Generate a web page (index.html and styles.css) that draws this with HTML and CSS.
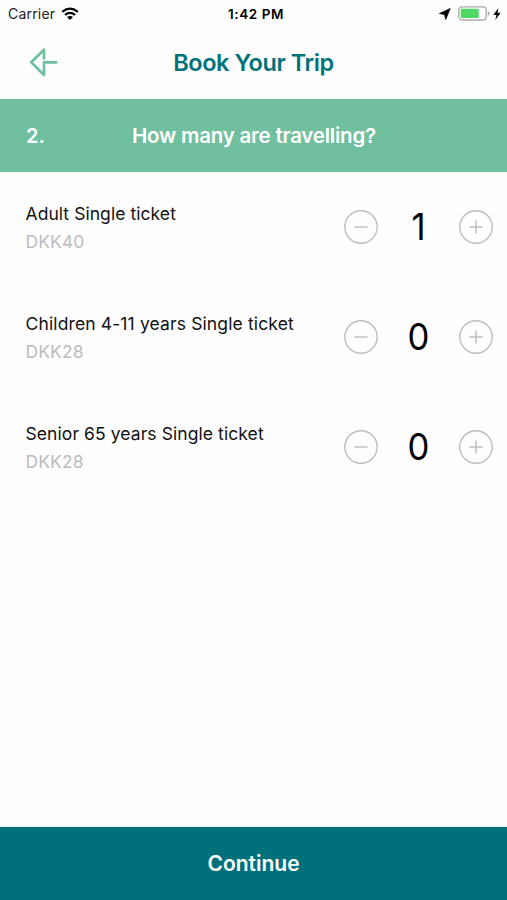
FILE: index.html
```html
<!DOCTYPE html>
<html lang="en">
<head>
<meta charset="utf-8">
<title>Book Your Trip</title>
<link rel="stylesheet" href="styles.css">
</head>
<body>
<div class="status">
  <div class="status-left"><span class="carrier">Carrier</span>
    <svg class="wifi" width="18" height="13" viewBox="0 0 18 13" fill="none" stroke="#000" stroke-width="2.2"><path d="M1.2 4.8Q9-1.6 16.8 4.8M4 7.9Q9 3.7 14 7.9"/><path d="M6 10.1Q9 7.7 12 10.1L9 13Z" fill="#000" stroke="none"/></svg>
  </div>
  <time class="clock">1:42 PM</time>
  <div class="status-right">
    <svg width="12" height="12" viewBox="0 0 12 12"><path d="M.5 5.5 11.2.5 6.7 11.5 5.6 6.5Z" stroke="#000" stroke-width=".8" stroke-linejoin="round"/></svg>
    <svg class="battery" width="32" height="15" viewBox="0 0 32 15"><rect x=".8" y=".8" width="27.4" height="13.2" rx="3.2" fill="#fff" stroke="#aaa" stroke-width="1.3"/><rect x="2.7" y="2.7" width="18" height="9.4" rx="1" fill="#4cd964"/><path d="M29.8 5.2Q31.5 5.8 31.5 7.4T29.8 9.7Z" fill="#aaa"/></svg>
    <svg class="bolt" width="8" height="12" viewBox="0 0 8 12"><path d="M5.4 0 .3 6.9H3.4L2.3 12 7.7 4.8H4.4Z"/></svg>
  </div>
</div>
<header class="nav">
  <svg class="back" width="30" height="30" viewBox="0 0 30 30" fill="none" stroke="#70bf9f" stroke-width="2.7" stroke-linejoin="round" stroke-linecap="round"><path d="M16 10.5V1.7L3.2 14.3 16 27V14.3H28.4"/></svg>
  <h1 class="title">Book Your Trip</h1>
</header>
<section class="step"><span class="step-number">2.</span><h2 class="question">How many are travelling?</h2></section>
<main class="tickets">
  <div class="ticket">
    <div class="info"><div class="name adult">Adult Single ticket</div><div class="price">DKK40</div></div>
    <div class="stepper"><button class="round" aria-label="Fewer"><svg width="34" height="34" viewBox="0 0 34 34"><circle cx="17" cy="17" r="16.2"/><path d="M10.5 17h13"/></svg></button><span class="count">1</span><button class="round" aria-label="More"><svg width="34" height="34" viewBox="0 0 34 34"><circle cx="17" cy="17" r="16.2"/><path d="M10.5 17h13M17 10.5v13"/></svg></button></div>
  </div>
  <div class="ticket">
    <div class="info"><div class="name children">Children 4-11 years Single ticket</div><div class="price">DKK28</div></div>
    <div class="stepper"><button class="round" aria-label="Fewer"><svg width="34" height="34" viewBox="0 0 34 34"><circle cx="17" cy="17" r="16.2"/><path d="M10.5 17h13"/></svg></button><span class="count">0</span><button class="round" aria-label="More"><svg width="34" height="34" viewBox="0 0 34 34"><circle cx="17" cy="17" r="16.2"/><path d="M10.5 17h13M17 10.5v13"/></svg></button></div>
  </div>
  <div class="ticket">
    <div class="info"><div class="name senior">Senior 65 years Single ticket</div><div class="price">DKK28</div></div>
    <div class="stepper"><button class="round" aria-label="Fewer"><svg width="34" height="34" viewBox="0 0 34 34"><circle cx="17" cy="17" r="16.2"/><path d="M10.5 17h13"/></svg></button><span class="count">0</span><button class="round" aria-label="More"><svg width="34" height="34" viewBox="0 0 34 34"><circle cx="17" cy="17" r="16.2"/><path d="M10.5 17h13M17 10.5v13"/></svg></button></div>
  </div>
</main>
<button class="continue">Continue</button>
</body>
</html>
```
FILE: styles.css
```css
* { box-sizing: border-box; }
body { margin: 0; height: 900px; display: flex; flex-direction: column; background: #fefefe; color: #000; font-family: Inter, "Liberation Sans", sans-serif; overflow: hidden; }
svg { display: block; flex: none; }
h1, h2 { margin: 0; }
button { border: 0; padding: 0; background: none; font-family: inherit; }
.status { height: 27px; display: grid; grid-template-columns: 1fr auto 1fr; align-items: center; padding: 0 6px 0 8px; white-space: nowrap; }
.status-left { display: flex; align-items: center; gap: 6px; }
.carrier { font-size: 14px; color: #222; letter-spacing: .2px; }
.clock { font-size: 13.5px; font-weight: 600; letter-spacing: .55px; padding-left: 3px; }
.status-right { display: flex; align-items: center; justify-content: flex-end; }
.battery { margin-left: 7px; }
.bolt { margin-left: 3px; }
.nav { height: 72px; display: grid; grid-template-columns: 60px 1fr 60px; align-items: center; }
.back { margin-left: 27.5px; }
.title { text-align: center; font-size: 23.5px; line-height: 28px; font-weight: 600; color: #00737a; letter-spacing: -.42px; }
.step { height: 73px; display: grid; grid-template-columns: 60px 1fr 60px; align-items: center; background: #70bf9f; color: #fff; }
.step-number { padding-left: 26px; font-size: 20px; font-weight: 600; }
.question { text-align: center; font-size: 20.5px; font-weight: 600; letter-spacing: -.22px; padding-left: 1px; white-space: nowrap; }
.tickets { flex: 1; }
.ticket { height: 110px; display: flex; align-items: center; justify-content: space-between; padding: 0 14px 0 25.5px; }
.info { padding-top: 1px; }
.name, .price { font-size: 17.5px; line-height: 28px; white-space: nowrap; }
.name { color: #111; letter-spacing: .06px; }
.children { letter-spacing: .13px; }
.senior { letter-spacing: .08px; }
.price { color: #bcbcbc; letter-spacing: .1px; }
.stepper { display: grid; grid-template-columns: 34px 81px 34px; align-items: center; }
.round { width: 34px; height: 34px; }
.round svg { fill: none; stroke: #bdbdbd; stroke-width: 1.4; }
.count { text-align: center; font-size: 36.5px; line-height: 44px; transform: scaleX(.95); }
.continue { height: 73px; background: #00717a; color: #fff; font-size: 21px; font-weight: 600; }
```
